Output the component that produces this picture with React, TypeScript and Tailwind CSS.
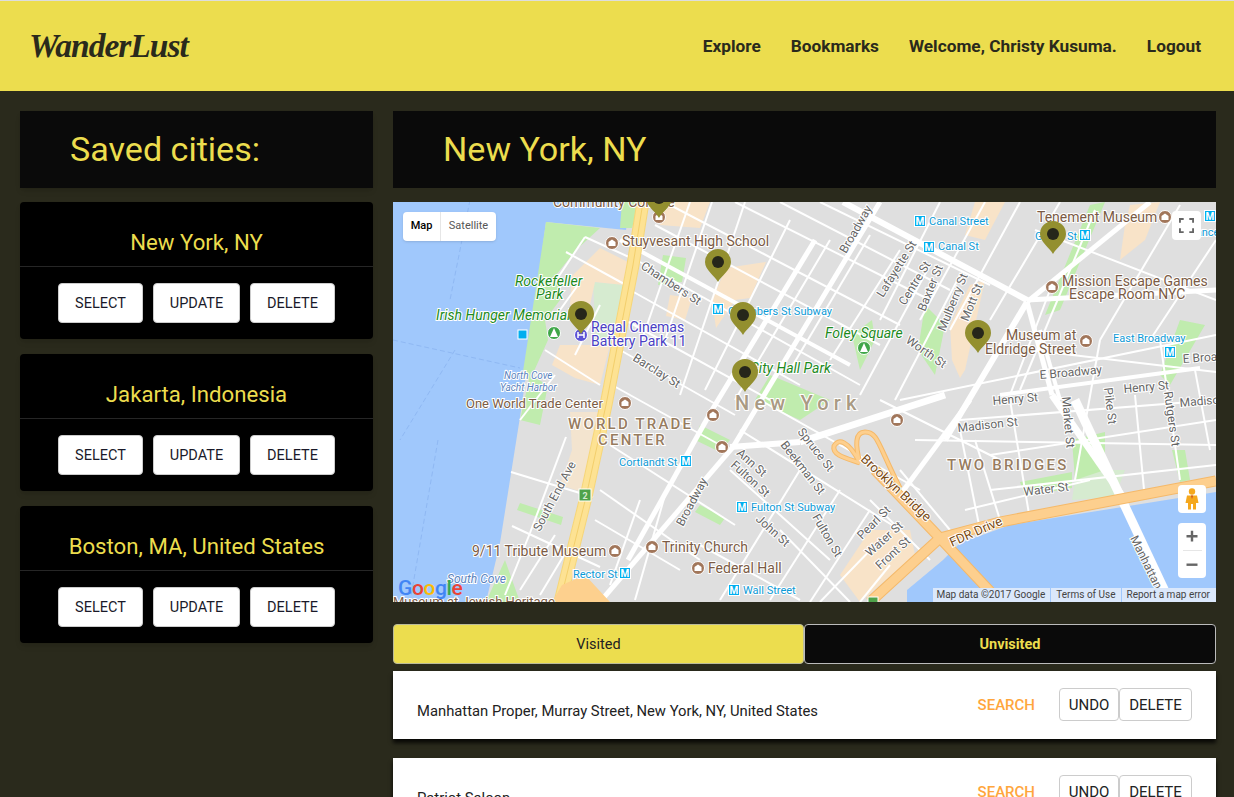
import React from 'react';

const font = { fontFamily: 'Roboto, sans-serif' };

// thin side streets, [x1, y1, x2, y2]
const thinStreets = [
  // tribeca cross streets
  [655, 225, 880, 345], [670, 205, 900, 325], [640, 262, 860, 385], [630, 290, 800, 385], [625, 320, 770, 400],
  [620, 350, 735, 415], [612, 385, 720, 445], [735, 202, 930, 300], [780, 202, 950, 290], [820, 202, 990, 285],
  // tribeca avenues
  [690, 202, 640, 345], [712, 202, 665, 340], [745, 202, 680, 395], [790, 220, 705, 390], [830, 240, 735, 400],
  [870, 235, 790, 370], [900, 250, 830, 360], [930, 265, 860, 395], [960, 275, 895, 400],
  // battery park
  [585, 237, 640, 262], [585, 237, 555, 282], [566, 252, 626, 285], [578, 285, 560, 310], [600, 305, 575, 355],
  [545, 350, 600, 385], [555, 375, 520, 420], [511, 472, 593, 497], [512, 526, 600, 567], [566, 437, 530, 533],
  [530, 533, 505, 595], [520, 590, 555, 535], [540, 595, 570, 545],
  // financial district
  [610, 445, 735, 525], [600, 490, 700, 560], [595, 520, 680, 570], [640, 500, 610, 585], [665, 495, 635, 600],
  [700, 545, 800, 600], [740, 430, 900, 530], [760, 400, 920, 490], [800, 470, 720, 600], [840, 490, 770, 600],
  [870, 510, 810, 602], [730, 470, 830, 560], [780, 530, 850, 602], [880, 540, 820, 602], [890, 565, 860, 602],
  // lower east side
  [900, 400, 1216, 335], [960, 420, 1216, 400], [915, 440, 1216, 445], [990, 455, 1216, 420], [990, 490, 1216, 465],
  [965, 510, 1090, 480], [1035, 230, 1216, 300], [1030, 350, 1216, 372], [1100, 340, 1075, 480], [1135, 395, 1145, 500],
  [1160, 340, 1180, 480], [1195, 370, 1210, 450], [1010, 400, 1030, 520], [960, 430, 980, 530], [1000, 520, 975, 440],
  [1050, 290, 1010, 395], [1095, 210, 1020, 390], [1180, 205, 1100, 340], [1216, 240, 1150, 340], [985, 202, 920, 320],
  [940, 202, 880, 320], [1020, 202, 950, 330], [1060, 202, 990, 320], [880, 400, 1000, 460], [900, 470, 950, 530],
  [870, 500, 930, 560], [905, 500, 870, 470],
];

// wide avenues
const wideStreets = [
  [600, 602, 733, 447, 5], [733, 447, 880, 202, 5], [628, 560, 712, 410, 5], [712, 410, 815, 240, 5],
  [843, 202, 1027, 300, 6], [1027, 300, 1216, 290, 5], [1150, 202, 1027, 302, 5], [1027, 302, 945, 440, 6],
  [970, 400, 900, 495, 5], [800, 442, 945, 395, 7], [730, 447, 800, 442, 6], [1075, 400, 1170, 602, 9],
  [1027, 302, 1052, 395, 5], [1040, 330, 1060, 400, 4], [1052, 395, 1125, 500, 7], [620, 240, 850, 365, 4],
  [1000, 395, 1200, 368, 4],
];

// map labels: x, y, text, rotation, size, colour class, extra class
const labels: [number, number, string, number, number, string, string?][] = [
  [622, 246, 'Stuyvesant High School', 0, 14, 'fill-[#7b5b45]'],
  [553, 207, 'Community College', 0, 14, 'fill-[#7b5b45]'],
  [515, 286, 'Rockefeller', 0, 14, 'fill-[#1d8a1d]', 'italic'],
  [536, 299, 'Park', 0, 14, 'fill-[#1d8a1d]', 'italic'],
  [436, 320, 'Irish Hunger Memorial', 0, 14, 'fill-[#1d8a1d]', 'italic'],
  [591, 332, 'Regal Cinemas', 0, 14, 'fill-[#4a3fc4]'],
  [591, 346, 'Battery Park 11', 0, 14, 'fill-[#4a3fc4]'],
  [504, 379, 'North Cove', 0, 10, 'fill-[#5a82bd]', 'italic'],
  [500, 391, 'Yacht Harbor', 0, 10, 'fill-[#5a82bd]', 'italic'],
  [466, 408, 'One World Trade Center', 0, 13, 'fill-[#7b5b45]'],
  [568, 429, 'WORLD TRADE', 0, 15, 'fill-[#977c5f]', 'font-medium tracking-[2.2px]'],
  [598, 445, 'CENTER', 0, 15, 'fill-[#977c5f]', 'font-medium tracking-[2.2px]'],
  [619, 466, 'Cortlandt St', 0, 11, 'fill-[#0d9ad6]'],
  [472, 556, '9/11 Tribute Museum', 0, 14, 'fill-[#7b5b45]'],
  [662, 552, 'Trinity Church', 0, 14, 'fill-[#7b5b45]'],
  [708, 573, 'Federal Hall', 0, 14, 'fill-[#7b5b45]'],
  [573, 578, 'Rector St', 0, 11, 'fill-[#0d9ad6]'],
  [743, 594, 'Wall Street', 0, 11, 'fill-[#0d9ad6]'],
  [447, 583, 'South Cove', 0, 12, 'fill-[#5a82bd]', 'italic'],
  [393, 606, 'Museum at Jewish Heritage', 0, 13, 'fill-[#7b5b45]'],
  [750, 373, 'City Hall Park', 0, 14, 'fill-[#1d8a1d]', 'italic'],
  [735, 410, 'New York', 0, 20, 'fill-[#a99a83]', 'font-medium tracking-[5.2px]'],
  [825, 338, 'Foley Square', 0, 14, 'fill-[#1d8a1d]', 'italic'],
  [929, 225, 'Canal Street', 0, 11, 'fill-[#0d9ad6]'],
  [938, 250, 'Canal St', 0, 11, 'fill-[#0d9ad6]'],
  [1035, 240, 'Grand St', 0, 11, 'fill-[#0d9ad6]'],
  [1180, 236, 'Delancey', 0, 11, 'fill-[#0d9ad6]'],
  [1037, 222, 'Tenement Museum', 0, 14, 'fill-[#7b5b45]'],
  [1062, 286, 'Mission Escape Games', 0, 14, 'fill-[#7b5b45]'],
  [1069, 299, 'Escape Room NYC', 0, 14, 'fill-[#7b5b45]'],
  [1006, 340, 'Museum at', 0, 14, 'fill-[#7b5b45]'],
  [985, 354, 'Eldridge Street', 0, 14, 'fill-[#7b5b45]'],
  [1113, 342, 'East Broadway', 0, 11, 'fill-[#0d9ad6]'],
  [1183, 363, 'E Broa', -4, 12, 'fill-[#666666]'],
  [1040, 379, 'E Broadway', -5, 12, 'fill-[#666666]'],
  [1124, 393, 'Henry St', -5, 12, 'fill-[#666666]'],
  [993, 405, 'Henry St', -5, 12, 'fill-[#666666]'],
  [958, 432, 'Madison St', -6, 12, 'fill-[#666666]'],
  [1180, 407, 'Madiso', -5, 12, 'fill-[#666666]'],
  [947, 470, 'TWO BRIDGES', 0, 15, 'fill-[#977c5f]', 'font-medium tracking-[2.2px]'],
  [1024, 496, 'Water St', -7, 12, 'fill-[#666666]'],
  [860, 460, 'Brooklyn Bridge', 43, 13, 'fill-[#7a4a12]'],
  [952, 547, 'FDR Drive', -24, 13, 'fill-[#7a4a12]'],
  [862, 540, 'Pearl St', -45, 12, 'fill-[#666666]'],
  [870, 557, 'Water St', -42, 12, 'fill-[#666666]'],
  [880, 570, 'Front St', -42, 12, 'fill-[#666666]'],
  [1130, 538, 'Manhattan', 64, 12, 'fill-[#666666]'],
  [640, 268, 'Chambers St', 33, 12, 'fill-[#666666]'],
  [632, 360, 'Barclay St', 32, 12, 'fill-[#666666]'],
  [728, 315, 'Chambers St Subway', 0, 11, 'fill-[#0d9ad6]'],
  [846, 254, 'Broadway', -60, 12, 'fill-[#666666]'],
  [883, 298, 'Lafayette St', -58, 12, 'fill-[#666666]'],
  [905, 306, 'Centre St', -58, 12, 'fill-[#666666]'],
  [925, 312, 'Baxter St', -68, 12, 'fill-[#666666]'],
  [945, 332, 'Mulberry St', -68, 12, 'fill-[#666666]'],
  [968, 322, 'Mott St', -68, 12, 'fill-[#666666]'],
  [905, 342, 'Worth St', 35, 12, 'fill-[#666666]'],
  [1062, 397, 'Market St', 85, 12, 'fill-[#666666]'],
  [1104, 388, 'Pike St', 83, 12, 'fill-[#666666]'],
  [1164, 392, 'Rutgers St', 82, 12, 'fill-[#666666]'],
  [540, 532, 'South End Ave', -62, 12, 'fill-[#666666]'],
  [683, 527, 'Broadway', -62, 12, 'fill-[#666666]'],
  [736, 454, 'Ann St', 42, 12, 'fill-[#666666]'],
  [730, 466, 'Fulton St', 42, 12, 'fill-[#666666]'],
  [755, 520, 'John St', 42, 12, 'fill-[#666666]'],
  [780, 445, 'Beekman St', 52, 12, 'fill-[#666666]'],
  [797, 432, 'Spruce St', 52, 12, 'fill-[#666666]'],
  [812, 517, 'Fulton St', 60, 12, 'fill-[#666666]'],
  [751, 511, 'Fulton St Subway', 0, 11, 'fill-[#0d9ad6]'],
];

// brown place markers
const places = [
  [612, 243], [625, 403], [659, 217], [615, 551], [652, 547], [698, 568], [713, 415], [722, 447], [897, 420],
  [1165, 217], [1052, 287], [1086, 341],
];

// subway squares
const subways = [
  [718, 309], [686, 461], [625, 573], [734, 590], [742, 507], [920, 221], [929, 247], [1085, 235], [1170, 352], [1210, 216],
];

const pins = [[659, 198], [718, 262], [581, 314], [743, 315], [745, 372], [1053, 234], [978, 333]];

const CityMap = () => (
  <svg viewBox="393 202 823 400" className="block h-[400px] w-[823px]" style={font}>
    <rect x="393" y="202" width="823" height="400" className="fill-[#dfdfdf]" />
    {/* water */}
    <path d="M393 202H630L626 230L546 222L526 375L520 417L500 543L486 602H393Z" className="fill-[#a0c8fc]" />
    <path d="M1216 492L1010 525L960 543L943 560L907 590V602H1216Z" className="fill-[#a0c8fc]" />
    <path d="M393 340L520 368M455 350L400 440M470 200L450 300M438 440L410 602" className="fill-none stroke-[#8fb8f3] stroke-1 [stroke-dasharray:5_3]" />
    {/* parks */}
    <path d="M546 222L600 228L576 250L556 275L560 300L545 320L548 340L530 380L522 378Z" className="fill-[#c0ecae]" />
    <path d="M622 202H640L632 228L620 228Z" className="fill-[#c0ecae]" />
    <path d="M530 375L520 420L540 425L548 385Z" className="fill-[#c0ecae]" />
    <path d="M593 282L626 285L615 345L596 340Z" className="fill-[#d6ebd0]" />
    <path d="M663 255L686 258L682 282L658 285Z" className="fill-[#c0ecae]" />
    <path d="M520 503L563 517L561 525L517 510Z" className="fill-[#c0ecae]" />
    <path d="M486 602L505 560L520 602Z" className="fill-[#c0ecae]" />
    <path d="M700 505L725 518L720 525L695 512Z" className="fill-[#c0ecae]" />
    <path d="M700 425L730 440L720 452L695 440Z" className="fill-[#c0ecae]" />
    <path d="M770 375L830 400L800 420L755 400Z" className="fill-[#c0ecae]" />
    <path d="M852 335L872 320L875 340L860 370Z" className="fill-[#c0ecae]" />
    <path d="M925 305L945 325L935 375L918 350Z" className="fill-[#c0ecae]" />
    <path d="M1090 205L1105 202L1060 310L1045 315Z" className="fill-[#c0ecae]" />
    <path d="M1180 320L1205 325L1170 385L1160 375Z" className="fill-[#c0ecae]" />
    <path d="M1072 440L1105 432L1105 475L1075 480Z" className="fill-[#c0ecae]" />
    <path d="M1105 470L1125 470L1115 497L1072 500L1075 480Z" className="fill-[#d6ebd0]" />
    <path d="M1172 450L1185 450L1190 480L1180 482Z" className="fill-[#c0ecae]" />
    <path d="M1020 482L1072 472V488L1025 496Z" className="fill-[#c0ecae]" />
    {/* peach blocks */}
    <path d="M572 276L600 248L628 262L624 285L595 282L590 305L570 305Z" className="fill-[#f8e3c8]" />
    <path d="M560 345L610 345L600 385L575 378L552 365Z" className="fill-[#f8e3c8]" />
    <path d="M570 412L605 412L592 495L560 485L572 450Z" className="fill-[#f3e4cf]" />
    <path d="M663 202H710L700 228L660 225Z" className="fill-[#f8e3c8]" />
    <path d="M670 295L692 298L685 320L666 316Z" className="fill-[#f8e3c8]" />
    <path d="M726 268L766 262L750 298L735 300L716 328L712 300Z" className="fill-[#f8e3c8]" />
    <path d="M975 202H1005L985 240L965 235Z" className="fill-[#f8e3c8]" />
    <path d="M970 285L985 280L965 370L960 378L952 360L950 325Z" className="fill-[#f8e3c8]" />
    <path d="M1130 205L1160 202L1145 240L1120 260L1125 225Z" className="fill-[#f8e3c8]" />
    <path d="M870 530L910 530L915 555L860 602L840 575Z" className="fill-[#f8e3c8]" />
    {/* streets */}
    {thinStreets.map((s, i) => (
      <line key={i} x1={s[0]} y1={s[1]} x2={s[2]} y2={s[3]} stroke="#ffffff" strokeWidth={2} />
    ))}
    {wideStreets.map((s, i) => (
      <line key={i} x1={s[0]} y1={s[1]} x2={s[2]} y2={s[3]} stroke="#ffffff" strokeWidth={s[4]} />
    ))}
    {/* highways */}
    <path d="M643 202L633 265L606 405L586 497L560 602" fill="none" stroke="#f6d67a" strokeWidth={13} />
    <path d="M643 202L633 265L606 405L586 497L560 602" fill="none" stroke="#fde293" strokeWidth={11} />
    <path d="M643 202L633 265L606 405L586 497L560 602" fill="none" stroke="#f3cf6c" strokeWidth={1} />
    <path d="M870 602L940 538L1000 522L1216 481" fill="none" stroke="#f5b969" strokeWidth={11} />
    <path d="M1000 602L940 538L875 470" fill="none" stroke="#f5b969" strokeWidth={11} />
    <path d="M860 463C845 458 832 455 834 446C838 438 848 440 860 463M860 463C855 445 855 432 865 432C878 432 878 445 900 488" fill="none" stroke="#f5b969" strokeWidth={5} />
    <path d="M860 463C845 458 832 455 834 446C838 438 848 440 860 463M860 463C855 445 855 432 865 432C878 432 878 445 900 488" fill="none" stroke="#fdcf8e" strokeWidth={3} />
    <path d="M870 602L940 538L1000 522L1216 481" fill="none" stroke="#fdcf8e" strokeWidth={9} />
    <path d="M1000 602L940 538L875 470" fill="none" stroke="#fdcf8e" strokeWidth={9} />
    <path d="M552 602L562 585L585 575L610 602Z" className="fill-[#fdd08e]" />
    {/* labels */}
    {labels.map((l, i) => (
      <text
        key={i}
        x={l[0]}
        y={l[1]}
        fontSize={l[4]}
        transform={l[3] ? `rotate(${l[3]} ${l[0]} ${l[1]})` : undefined}
        className={`stroke-white stroke-2 [paint-order:stroke] ${l[5]} ${l[6] ?? ''}`}
      >
        {l[2]}
      </text>
    ))}
    {/* markers */}
    {places.map((p, i) => (
      <g key={i} transform={`translate(${p[0]} ${p[1]})`}>
        <circle r="6.5" className="fill-[#a1765a] stroke-white stroke-1" />
        <path d="M-3.5 3V-1L0 -3.5L3.5 -1V3Z" className="fill-white" />
      </g>
    ))}
    <circle cx="581" cy="335" r="6.5" className="fill-[#5c52d6] stroke-white stroke-1" />
    <path d="M578 332V338M584 332V338M578 335H584" className="fill-none stroke-white stroke-[1.5]" />
    <circle cx="554" cy="333" r="6.5" className="fill-[#3fa648] stroke-white stroke-1" />
    <path d="M554 328L558 337H550Z" className="fill-white" />
    <circle cx="864" cy="348" r="6.5" className="fill-[#3fa648] stroke-white stroke-1" />
    <path d="M864 343L868 352H860Z" className="fill-white" />
    <rect x="518" y="330" width="9" height="9" className="fill-[#00aeef] stroke-white stroke-1" />
    {subways.map((s, i) => (
      <g key={i}>
        <rect x={s[0] - 5.5} y={s[1] - 5.5} width="11" height="11" className="fill-[#00aeef] stroke-white stroke-1" />
        <text x={s[0]} y={s[1] + 3.5} fontSize="10" textAnchor="middle" className="fill-white font-bold">M</text>
      </g>
    ))}
    <rect x="579" y="489" width="12" height="12" className="fill-[#4fa24a] stroke-white stroke-1" />
    <text x="585" y="499" fontSize="9" textAnchor="middle" className="fill-[#d5ead0] font-bold">2</text>
    <rect x="868" y="597" width="10" height="8" className="fill-[#4fa24a] stroke-white stroke-1" />
    {/* pins */}
    {pins.map((p, i) => (
      <g key={i} transform={`translate(${p[0]} ${p[1]})`}>
        <path d="M0 20C-3 14 -13 8 -13 0A13 13 0 0 1 13 0C13 8 3 14 0 20Z" className="fill-[#938f2f]" />
        <circle r="6" className="fill-[#26261a]" />
      </g>
    ))}
  </svg>
);

const MapOverlays = () => (
  <>
    <div className="absolute left-[10px] top-[10px] flex h-[29px] overflow-hidden rounded-sm bg-white text-[11px] shadow-sm">
      <div className="flex w-[38px] items-center justify-center border-r border-[#e6e6e6] font-medium text-black">Map</div>
      <div className="flex w-[55px] items-center justify-center text-[#565656]">Satellite</div>
    </div>
    <div className="absolute left-[779px] top-[9px] flex h-[29px] w-[29px] items-center justify-center rounded-sm bg-white">
      <svg width="15" height="15" viewBox="0 0 16 16" className="fill-none stroke-[#666666] stroke-2">
        <path d="M1 5V1H5M11 1H15V5M15 11V15H11M5 15H1V11" />
      </svg>
    </div>
    <div className="absolute left-[785px] top-[283px] flex h-[28px] w-[28px] items-center justify-center rounded-sm bg-white">
      <svg width="14" height="22" viewBox="0 0 14 22">
        <circle cx="7" cy="3.5" r="3.2" className="fill-[#f5a81d]" />
        <path d="M2 7.5H12L13.5 15H11V21.5H8V16H6V21.5H3V15H0.5Z" className="fill-[#f5a81d]" />
        <path d="M6 7.5H8L7 11Z" className="fill-[#c8451c]" />
      </svg>
    </div>
    <div className="absolute left-[785px] top-[321px] flex h-[55px] w-[28px] flex-col items-center rounded-sm bg-white">
      <svg width="14" height="27" viewBox="0 0 14 27" className="fill-[#666666]">
        <path d="M1.5 12H5.8V7.8H8.2V12H12.5V14.4H8.2V18.6H5.8V14.4H1.5Z" />
      </svg>
      <div className="h-px w-[19px] bg-[#e6e6e6]" />
      <svg width="14" height="27" viewBox="0 0 14 27" className="fill-[#666666]">
        <path d="M1.5 12.5H12.5V14.9H1.5Z" />
      </svg>
    </div>
    <div className="absolute bottom-[3px] left-[5px] text-[21px] font-medium leading-none tracking-[-0.4px]">
      <span className="text-[#4285f4]">G</span>
      <span className="text-[#ea4335]">o</span>
      <span className="text-[#fbbc05]">o</span>
      <span className="text-[#4285f4]">g</span>
      <span className="text-[#34a853]">l</span>
      <span className="text-[#ea4335]">e</span>
    </div>
    <div className="absolute bottom-0 right-0 flex h-[14px] items-center gap-[1px] text-[10px] leading-none text-[#444444]">
      <span className="flex h-full items-center bg-[#dbe8fb] pl-[3px] pr-[5px]">Map data ©2017 Google</span>
      <span className="flex h-full items-center bg-[#dbe8fb] px-[5px]">Terms of Use</span>
      <span className="flex h-full items-center bg-[#dbe8fb] pl-[5px] pr-[6px]">Report a map error</span>
    </div>
  </>
);

const CityCard = ({ name }: { name: string }) => (
  <div className="h-[137px] rounded-sm bg-black shadow-md">
    <div className="flex h-[65px] items-end justify-center border-b border-[#262626] pb-[9px] text-[22.2px] leading-[30px] text-[#ecdd4e]">
      {name}
    </div>
    <div className="flex justify-center gap-[10px] pt-[16px]">
      <button className="h-10 w-[85px] rounded border border-[#cccccc] bg-white pt-[2px] text-[14.5px] text-[#1a1a2a]">SELECT</button>
      <button className="h-10 w-[87px] rounded border border-[#cccccc] bg-white pt-[2px] text-[14.5px] text-[#1a1a2a]">UPDATE</button>
      <button className="h-10 w-[85px] rounded border border-[#cccccc] bg-white pt-[2px] text-[14.5px] text-[#1a1a2a]">DELETE</button>
    </div>
  </div>
);

const PlaceRow = ({ name }: { name: string }) => (
  <div className="flex h-[68px] shrink-0 justify-between bg-white pl-6 pr-6 shadow-[0_4px_4px_rgba(0,0,0,0.8)]">
    <div className="pt-[31px] text-[14.8px] leading-[18px] text-[#222222]">{name}</div>
    <div className="flex items-start pt-[17px]">
      <span className="mr-6 mt-[9px] text-[15px] font-medium leading-[16px] text-[#ffa63c]">SEARCH</span>
      <button className="h-[33px] w-[60px] rounded border border-[#cccccc] bg-white pt-[2px] text-[15px] text-[#222222]">UNDO</button>
      <button className="h-[33px] w-[73px] rounded border border-[#cccccc] bg-white pt-[2px] text-[15px] text-[#222222]">DELETE</button>
    </div>
  </div>
);

export default function App() {
  return (
    <div className="h-[797px] overflow-hidden bg-[#2a2a1c]" style={font}>
      {/* Navbar */}
      <header className="flex h-[91px] items-center justify-between border-t border-[#dddddd] bg-[#ecdd4e] pl-[29px] pr-[33px] text-[#2a2a1c]">
        <div className="text-[33.5px] font-bold italic leading-none tracking-[-1px]" style={{ fontFamily: '"Liberation Serif", serif' }}>
          WanderLust
        </div>
        <nav className="flex gap-[30px] pt-[2px] text-[17.25px] font-bold">
          <span>Explore</span>
          <span>Bookmarks</span>
          <span>Welcome, Christy Kusuma.</span>
          <span>Logout</span>
        </nav>
      </header>

      <main className="flex gap-5 px-5 pt-5">
        {/* Saved cities */}
        <div className="flex w-[353px] shrink-0 flex-col">
          <div className="mb-[14px] flex h-[77px] items-center bg-[#0a0a0a] pl-[50px] text-[34.1px] text-[#ecdd4e] shadow-md">
            Saved cities:
          </div>
          <div className="flex flex-col gap-[15px]">
            <CityCard name="New York, NY" />
            <CityCard name="Jakarta, Indonesia" />
            <CityCard name="Boston, MA, United States" />
          </div>
        </div>

        {/* Selected city */}
        <div className="flex w-[823px] shrink-0 flex-col">
          <div className="mb-[14px] flex h-[77px] items-center bg-[#0a0a0a] pl-[50px] text-[34.1px] text-[#ecdd4e]">
            New York, NY
          </div>
          <div className="relative h-[400px] overflow-hidden">
            <CityMap />
            <MapOverlays />
          </div>
          <div className="mt-[22px] flex h-10">
            <button className="h-10 w-[411px] rounded border border-[#bbbb99] bg-[#ecdd4e] pt-[2px] text-[14.5px] text-[#222222]">Visited</button>
            <button className="h-10 w-[412px] rounded border border-[#bbbbbb] bg-[#0a0a0a] pt-[2px] text-[14.5px] font-bold text-[#ecdd4e]">Unvisited</button>
          </div>
          <div className="mt-[7px] flex flex-col gap-[19px]">
            <PlaceRow name="Manhattan Proper, Murray Street, New York, NY, United States" />
            <PlaceRow name="Patriot Saloon" />
          </div>
        </div>
      </main>
    </div>
  );
}
